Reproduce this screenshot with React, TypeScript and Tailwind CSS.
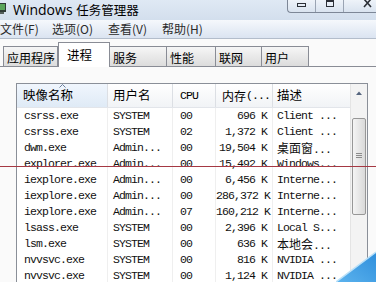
import React from 'react';

const rows = [
  ['csrss.exe', 'SYSTEM', '00', '696 K', 'Client ...'],
  ['csrss.exe', 'SYSTEM', '02', '1,372 K', 'Client ...'],
  ['dwm.exe', 'Admin...', '00', '19,504 K', '桌面窗...'],
  ['explorer.exe', 'Admin...', '00', '15,492 K', 'Windows...'],
  ['iexplore.exe', 'Admin...', '00', '6,456 K', 'Interne...'],
  ['iexplore.exe', 'Admin...', '00', '286,372 K', 'Interne...'],
  ['iexplore.exe', 'Admin...', '07', '160,212 K', 'Interne...'],
  ['lsass.exe', 'SYSTEM', '00', '2,396 K', 'Local S...'],
  ['lsm.exe', 'SYSTEM', '00', '636 K', '本地会...'],
  ['nvvsvc.exe', 'SYSTEM', '00', '816 K', 'NVIDIA ...'],
  ['nvvsvc.exe', 'SYSTEM', '00', '1,124 K', 'NVIDIA ...'],
];

const tabs = [
  {label: '应用程序', w: 'w-[55px]'},
  {label: '进程', w: 'w-[52px]', active: true},
  {label: '服务', w: 'w-[57px]'},
  {label: '性能', w: 'w-[49px]'},
  {label: '联网', w: 'w-[46px]'},
  {label: '用户', w: 'w-[47px]'},
];

// chinese runs get a sans face at full size, the rest stays in the mono face
function Mixed({text}: {text: string}) {
  const parts = text.split(/([\u4e00-\u9fff]+)/).filter(Boolean);
  return (
    <>
      {parts.map((p, i) =>
        /[\u4e00-\u9fff]/.test(p) ? (
          <span key={i} className="font-['Noto_Sans_CJK_SC',sans-serif] text-[12px] tracking-normal">{p}</span>
        ) : (
          <span key={i}>{p}</span>
        )
      )}
    </>
  );
}

const cols = 'grid grid-cols-[91px_65px_43px_57px_77px]';

export default function App() {
  return (
    <div className="relative flex flex-col w-[376px] h-[282px] overflow-hidden bg-[#fafafa] font-['Noto_Sans_CJK_SC',sans-serif] text-black">
      {/* title bar */}
      <div className="flex h-[20px] shrink-0 bg-linear-to-b from-[#dfe9f4] to-[#d3dfed]">
        <svg width="7" height="14" viewBox="0 0 7 14" className="mt-[2px]">
          <rect x="-4" y="1" width="10" height="9" fill="#2f3a36" />
          <rect x="-3" y="2" width="8" height="6" fill="#5aa55a" />
          <rect x="-2" y="10" width="6" height="2" fill="#55605c" />
        </svg>
        <div className="ml-[6px] h-[16px] leading-[16px] whitespace-nowrap">
          <span className="font-['Open_Sans','Noto_Sans_CJK_SC',sans-serif] text-[14px]">Windows </span>
          <span className="text-[12.5px]">任务管理器</span>
        </div>
        <div className="ml-auto flex h-[13px] border-l border-b border-[#7d8797] rounded-bl-[4px] bg-linear-to-b from-[#eef3f9] to-[#d9e3ef]">
          <div className="flex w-[28px] justify-center border-r border-[#9aa4b3]">
            <div className="mt-[3px] w-[9px] h-[4px] border border-[#2b2f36]" />
          </div>
          <div className="flex w-[28px] justify-center border-r border-[#9aa4b3]">
            <div className="mt-0 w-[8px] h-[7px] border border-t-[2px] border-[#2b2f36]" />
          </div>
          <div className="flex w-[32px] justify-end pr-[3px]">
            <svg width="10" height="8" viewBox="0 0 10 8">
              <path d="M1 -1 L8 7 M8 -1 L1 7" stroke="#2b2f36" strokeWidth="1.6" />
            </svg>
          </div>
        </div>
      </div>

      {/* menu bar */}
      <div className="flex h-[19px] shrink-0 items-center text-[12px] text-[#2a2a2a] border-b border-[#b3bdcb] bg-linear-to-b from-[#f5f8fc] to-[#dbe4f1]">
        <span className="w-[52px]">文件(F)</span>
        <span className="w-[56px]">选项(O)</span>
        <span className="w-[54px]">查看(V)</span>
        <span>帮助(H)</span>
      </div>

      {/* tabs */}
      <div className="flex h-[28px] shrink-0 items-end pl-[3px] border-b border-[#898c95]">
        {tabs.map((t) =>
          t.active ? (
            <div key={t.label} className={`${t.w} relative z-10 -mb-px flex h-[25px] items-start pt-[3px] pl-[8px] text-[12.5px] whitespace-nowrap bg-white border border-b-0 border-[#898c95]`}>
              {t.label}
            </div>
          ) : (
            <div key={t.label} className={`${t.w} flex h-[20px] items-center pl-[3px] pt-[2px] text-[12px] whitespace-nowrap border border-b-0 border-l-0 first:border-l border-[#898c95] bg-linear-to-b from-[#f6f6f6] to-[#dcdcdc]`}>
              {t.label}
            </div>
          )
        )}
      </div>

      {/* process list */}
      <div className="flex-1 min-h-0 pl-[16px] pt-[16px]">
        <div className="flex w-[352px] h-full border border-b-0 border-[#8a8f98] bg-white">
          <div className="w-[333px]">
            <div className={`${cols} h-[24px] border-b border-[#e2e5ea] text-[12.5px]`}>
              <div className="relative flex items-center pl-[6px] border-r border-[#dcdfe4] bg-linear-to-b from-[#f0f6fd] to-[#dfeaf6]">
                映像名称
                <svg width="7" height="4" viewBox="0 0 7 4" className="absolute left-[42px] top-0">
                  <path d="M0.5 3.5 L3.5 0.5 L6.5 3.5" fill="none" stroke="#6d7f9a" />
                </svg>
              </div>
              <div className="flex items-center pl-[5px] border-r border-[#dcdfe4] bg-linear-to-b from-white to-[#f1f3f6]">用户名</div>
              <div className="flex items-center pl-[7px] border-r border-[#dcdfe4] bg-linear-to-b from-white to-[#f1f3f6] font-['Liberation_Mono',monospace] text-[11.5px] tracking-[-0.9px]">CPU</div>
              <div className="flex items-center pl-[6px] border-r border-[#dcdfe4] bg-linear-to-b from-white to-[#f1f3f6] font-['Liberation_Mono',monospace] text-[11.5px] tracking-[-0.9px]">
                <Mixed text="内存(..." />
              </div>
              <div className="flex items-center pl-[4px] bg-linear-to-b from-white to-[#f1f3f6]">描述</div>
            </div>
            {rows.map((r, i) => (
              <div key={i} className={`${cols} h-[16px] font-['Liberation_Mono',monospace] text-[11.5px] tracking-[-0.9px] leading-[16px] text-[#111] whitespace-nowrap`}>
                <div className="pl-[7px] border-r border-[#efefef]">{r[0]}</div>
                <div className="pl-[5px] border-r border-[#efefef]">{r[1]}</div>
                <div className="pl-[7px] border-r border-[#efefef]">{r[2]}</div>
                <div className="pr-[5px] text-right border-r border-[#efefef]">{r[3]}</div>
                <div className="pl-[4px]"><Mixed text={r[4]} /></div>
              </div>
            ))}
          </div>

          {/* scrollbar */}
          <div className="flex w-[17px] flex-col border-l border-[#e4e4e4] bg-[#f3f3f3]">
            <div className="flex h-[17px] items-center justify-center">
              <svg width="6" height="4" viewBox="0 0 6 4">
                <path d="M0 4 L3 0.5 L6 4 Z" fill="#55657e" />
              </svg>
            </div>
            <div className="h-[17px]" />
            <div className="mx-[1px] flex h-[97px] flex-col items-center rounded-[2px] border border-[#979797] bg-linear-to-r from-[#f4f4f4] to-[#d9d9d9]">
              <div className="mt-[34px] flex flex-col gap-[1px]">
                <div className="w-[6px] h-px bg-[#8c8c8c]" />
                <div className="w-[6px] h-px bg-[#8c8c8c]" />
                <div className="w-[6px] h-px bg-[#8c8c8c]" />
              </div>
            </div>
          </div>
        </div>
      </div>

      {/* red rule drawn across the shot */}
      <div className="absolute left-0 top-[166px] w-full h-px bg-[#a53843]" />

      {/* blue corner */}
      <svg width="40" height="31" viewBox="0 0 40 31" className="absolute right-0 bottom-0">
        <defs>
          <linearGradient id="corner" x1="0" y1="1" x2="1" y2="0">
            <stop offset="0" stopColor="#5cb3ee" />
            <stop offset="1" stopColor="#2f8fdc" />
          </linearGradient>
        </defs>
        <polygon points="0,31 40,1 40,31" fill="url(#corner)" />
        <path d="M0 31 L40 1" stroke="#b9e0f8" strokeWidth="1.5" />
      </svg>
    </div>
  );
}
